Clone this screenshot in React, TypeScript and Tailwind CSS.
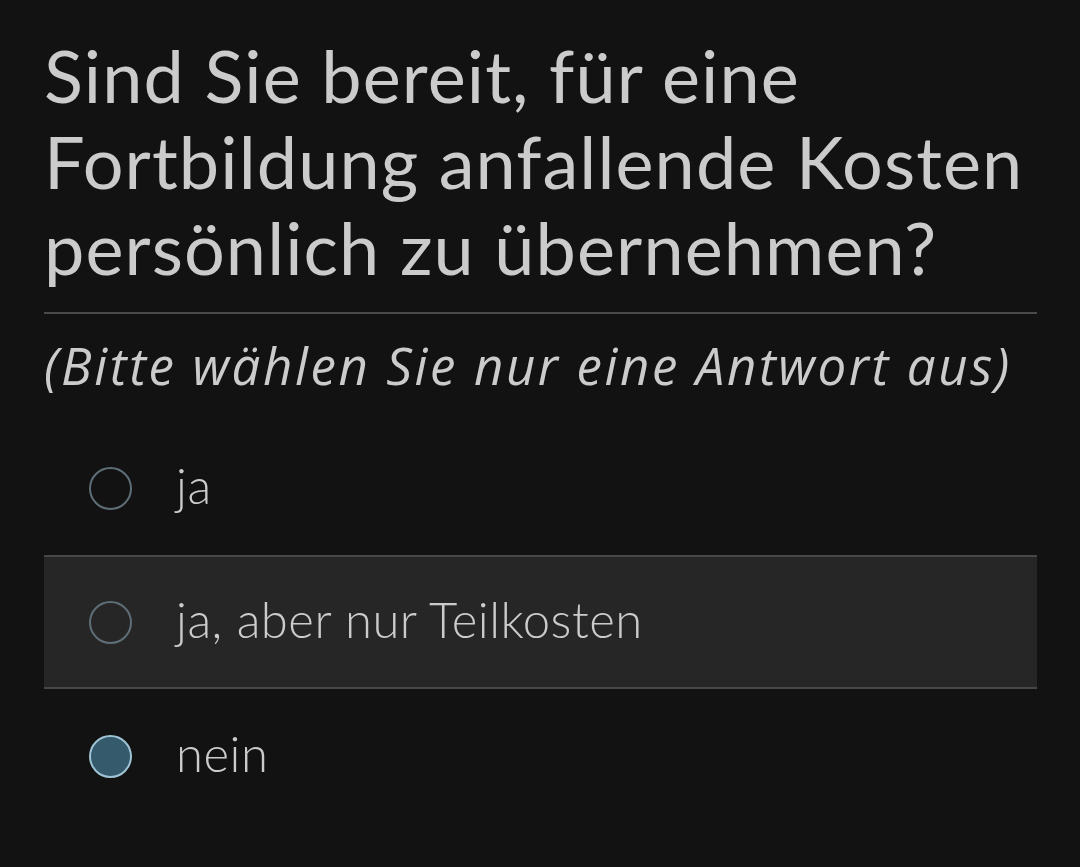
import { useState } from "react";

const options = ["ja", "ja, aber nur Teilkosten", "nein"];

export default function App() {
  const [selected, setSelected] = useState(2);
  const [hovered] = useState(1);

  return (
    <div
      className="min-h-[867px] w-full bg-[#121212] pl-[44px] pr-[43px] pt-[32px] text-[#cbcbcb]"
      style={{ fontFamily: "Lato, 'Open Sans', sans-serif" }}
    >
      <h1 className="text-[72px] leading-[86px] font-normal tracking-[1.1px]">
        Sind Sie bereit, für eine Fortbildung anfallende Kosten persönlich zu übernehmen?
      </h1>
      <div className="mt-[22px] h-[2px] bg-[#4a4a4a]" />
      <p
        className="mt-[21px] text-[51px] leading-[60px] italic tracking-[2.6px] whitespace-nowrap"
        style={{ fontFamily: "'Open Sans', sans-serif" }}
      >
        (Bitte wählen Sie nur eine Antwort aus)
      </p>

      <div className="mt-[26px] flex flex-col">
        {options.map((opt, i) => (
          <button
            key={opt}
            onClick={() => setSelected(i)}
            className={`flex h-[134px] items-center text-left ${
              hovered === i ? "border-y-2 border-[#474747] bg-[#262626]" : ""
            }`}
          >
            <span
              className={`ml-[45px] h-[43px] w-[43px] shrink-0 rounded-full border-2 ${
                selected === i
                  ? "border-[#9ec3d4] bg-[#355a6b]"
                  : "border-[#5e6e77] bg-transparent"
              }`}
            />
            <span className="ml-[44px] pb-[4px] text-[49px] font-light tracking-[0.5px] text-[#cbcbcb]">
              {opt}
            </span>
          </button>
        ))}
      </div>
    </div>
  );
}
